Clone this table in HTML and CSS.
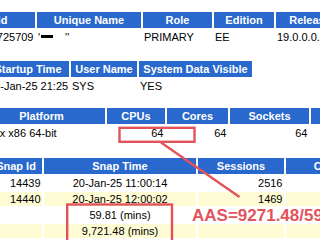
FILE: index.html
```html
<!DOCTYPE html>
<html>
<head>
<meta charset="utf-8">
<link rel="stylesheet" href="styles.css">
</head>
<body>
<div class="page">
  <div class="tbl t1">
    <div class="th">DB Id</div>
    <div class="th">Unique Name</div>
    <div class="th">Role</div>
    <div class="th">Edition</div>
    <div class="th">Release</div>
    <div class="td r">725709</div>
    <div class="td">'<span class="redact"></span>''</div>
    <div class="td">PRIMARY</div>
    <div class="td">EE</div>
    <div class="td">19.0.0.0.0</div>
  </div>

  <div class="tbl t2">
    <div class="th">Startup Time</div>
    <div class="th">User Name</div>
    <div class="th">System Data Visible</div>
    <div class="td">20-Jan-25 21:25</div>
    <div class="td">SYS</div>
    <div class="td">YES</div>
  </div>

  <div class="tbl t3">
    <div class="th">Platform</div>
    <div class="th">CPUs</div>
    <div class="th">Cores</div>
    <div class="th">Sockets</div>
    <div class="th">Memory (GB)</div>
    <div class="td">Linux x86 64-bit</div>
    <div class="td r">64</div>
    <div class="td r">64</div>
    <div class="td r">64</div>
    <div class="td r"></div>
  </div>

  <div class="tbl t4">
    <div class="th">Snap Id</div>
    <div class="th">Snap Time</div>
    <div class="th">Sessions</div>
    <div class="th">Cursors/Session</div>

    <div class="td r">14439</div>
    <div class="td c">20-Jan-25 11:00:14</div>
    <div class="td r">2516</div>
    <div class="td r"></div>

    <div class="td r y">14440</div>
    <div class="td c y">20-Jan-25 12:00:02</div>
    <div class="td r y">1469</div>
    <div class="td r y"></div>

    <div class="td r"></div>
    <div class="td c">59.81 (mins)</div>
    <div class="td r"></div>
    <div class="td r"></div>

    <div class="td r y"></div>
    <div class="td c y">9,721.48 (mins)</div>
    <div class="td r y"></div>
    <div class="td r y"></div>
  </div>

  <svg class="marks" width="320" height="240" viewBox="0 0 320 240">
    <rect x="119.5" y="127.8" width="75" height="14" fill="none" stroke="#e2535c" stroke-width="2.4"/>
    <line x1="161" y1="142.5" x2="239.5" y2="197" stroke="#e2535c" stroke-width="2.4"/>
    <rect x="67.2" y="204.5" width="104.8" height="50" fill="none" stroke="#e2535c" stroke-width="2.4"/>
  </svg>
  <div class="aas">AAS=9271.48/59.81</div>
</div>
</body>
</html>
```

FILE: styles.css
```css
html, body {
  margin: 0;
  padding: 0;
  overflow: hidden;
  background: #ffffff;
}

body {
  font-family: "Liberation Sans", Arial, sans-serif;
  font-size: 11px;
  color: #000000;
}

.page {
  position: relative;
  width: 320px;
  height: 240px;
  overflow: hidden;
  padding-top: 12px;
  box-sizing: border-box;
}

.tbl {
  display: grid;
  column-gap: 2px;
  row-gap: 2px;
  width: max-content;
}

.t1 {
  margin-left: -49px;
  grid-template-columns: 84px 104px 69px 60px 68px;
}

.t2 {
  margin-top: 17px;
  margin-left: -13px;
  grid-template-columns: 82px 66px 113px;
}

.t3 {
  margin-top: 15px;
  margin-left: -22px;
  grid-template-columns: 127px 58px 61px 79px 100px;
}

.t4 {
  margin-top: 18px;
  margin-left: -10px;
  grid-template-columns: 52px 152px 86px 143px;
}

.th {
  background: #2968cc;
  color: #ffffff;
  font-weight: bold;
  text-align: center;
  height: 16px;
  line-height: 16px;
  white-space: nowrap;
}

.td {
  height: 14px;
  line-height: 14px;
  padding: 0 1px;
  white-space: nowrap;
}

.r {
  text-align: right;
  padding-right: 1.5px;
}

.c {
  text-align: center;
}

.y {
  background: #fefcd4;
}

.redact {
  display: inline-block;
  width: 12px;
  height: 3px;
  background: #000000;
  margin-left: 1px;
  margin-right: 12px;
  vertical-align: 3px;
}

.marks {
  position: absolute;
  left: 0;
  top: 0;
}

.aas {
  position: absolute;
  left: 192px;
  top: 207px;
  font-weight: bold;
  font-size: 17px;
  line-height: 17px;
  color: #e2535c;
  white-space: nowrap;
}
```
